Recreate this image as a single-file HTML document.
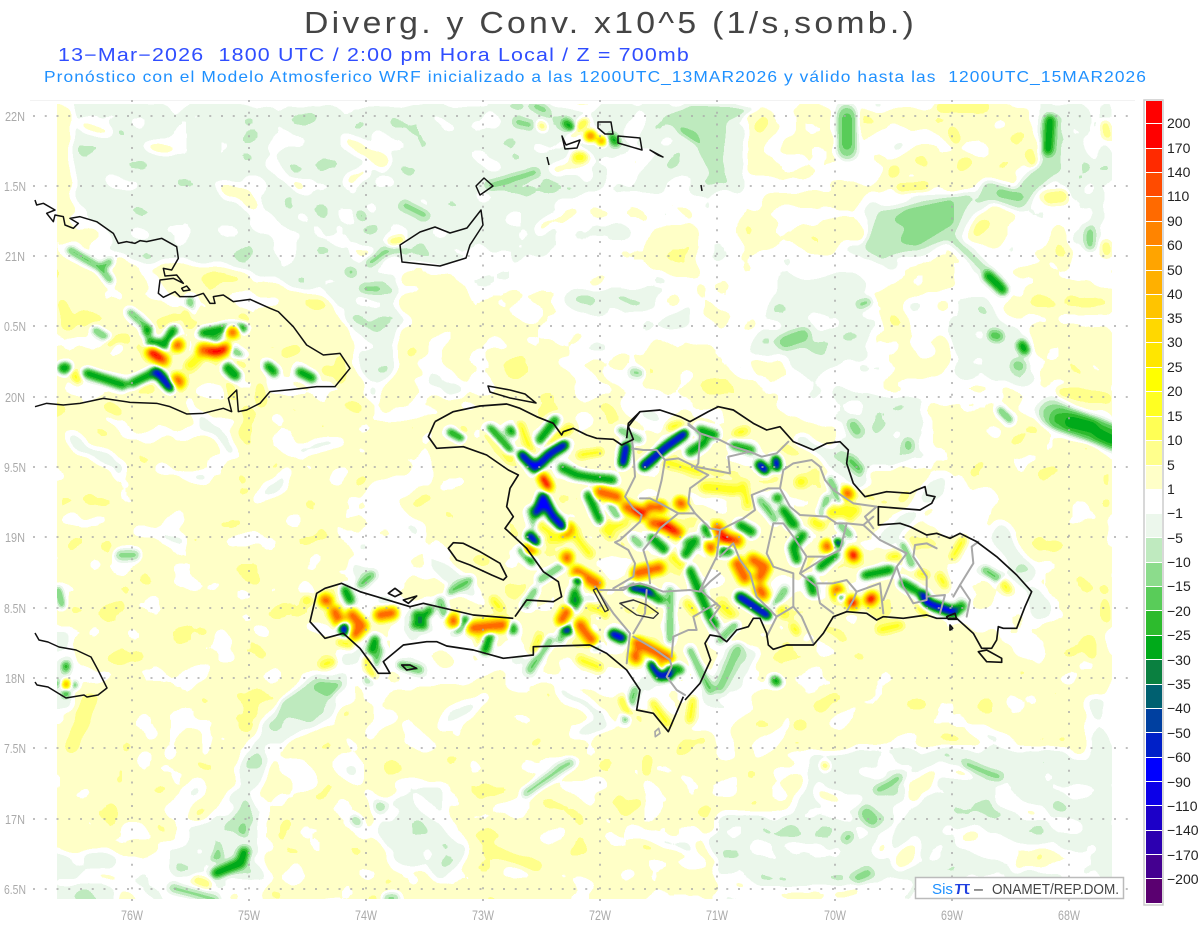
<!DOCTYPE html>
<html><head><meta charset="utf-8"><title>Diverg. y Conv.</title>
<style>
html,body{margin:0;padding:0;background:#fff}
svg{display:block}
text{font-family:"Liberation Sans",sans-serif;white-space:pre}
</style></head><body>
<svg xmlns="http://www.w3.org/2000/svg" width="1200" height="927" viewBox="0 0 1200 927">
<defs>
<clipPath id="plot"><rect x="57" y="104" width="1055" height="795"/></clipPath>
<filter id="base" filterUnits="userSpaceOnUse" x="0" y="0" width="1200" height="927" color-interpolation-filters="sRGB">
<feTurbulence type="fractalNoise" baseFrequency="0.03 0.045" numOctaves="2" seed="7" result="t1"/>
<feDisplacementMap in="SourceGraphic" in2="t1" scale="14" xChannelSelector="R" yChannelSelector="G" result="d"/>
<feTurbulence type="fractalNoise" baseFrequency="0.03 0.045" numOctaves="3" seed="23"/>
<feColorMatrix type="matrix" values="1 0 0 0 0 1 0 0 0 0 1 0 0 0 0 0 0 0 0 1" result="n"/>
<feComposite in="d" in2="n" operator="arithmetic" k1="0" k2="1" k3="0.1" k4="-0.05"/>
<feGaussianBlur stdDeviation="2"/>
</filter>
<filter id="cmap" filterUnits="userSpaceOnUse" x="0" y="0" width="1200" height="927" color-interpolation-filters="sRGB">
<feGaussianBlur stdDeviation="3"/>
<feComponentTransfer>
<feFuncR type="discrete" tableValues=".353 .267 .173 .11 .047 0 0 0 0 .039 0 .176 .349 .549 .749 .925 1 1 1 1 1 1 1 1 1 1 1 1 1 1 1 1 1"/>
<feFuncG type="discrete" tableValues="0 0 0 0 0 0 .125 .251 .376 .502 .667 .733 .8 .863 .918 .969 1 1 1 1 1 1 .902 .847 .769 .69 .643 .518 .416 .294 .165 0 0"/>
<feFuncB type="discrete" tableValues=".439 .565 .69 .784 .91 1 .784 .627 .439 .251 .102 .176 .349 .549 .749 .925 1 .784 .549 .333 .133 0 0 0 0 0 0 0 0 0 0 0 0"/>
</feComponentTransfer>
</filter>
</defs>

<rect width="1200" height="927" fill="#fff"/>
<line x1="30" y1="100.5" x2="1135" y2="100.5" stroke="#f2f2f2"/>

<g clip-path="url(#plot)">
<g filter="url(#cmap)">
<g filter="url(#base)">
<rect width="1200" height="927" fill="#808080"/>
<g fill="#878787">
<path d="M840 108L1030 108L1040 190L1000 190L880 190L833 160Z"/>
<path d="M745 108L832 108L833 165L800 182L745 172Z"/>
<path d="M740 195L860 195L858 240L800 262L745 245Z"/>
<path d="M963 233L973 210L1000 202L1017 213L1010 237L997 250L973 243Z"/>
<path d="M1000 272L1033 263L1112 290L1112 412L1073 402L1033 387L1045 367L1027 333L1003 307L1030 297Z"/>
<path d="M885 270L950 262L960 285L930 300L930 325L950 340L945 375L885 385Z"/>
<path d="M933 400L1000 402L1112 438L1112 745L1040 745L1045 640L1000 560L960 470L933 470Z"/>
<path d="M393 298L450 275L520 315L510 325L560 355L600 385L620 412L380 412L375 340L410 325Z"/>
<path d="M40 190L70 190L70 245L130 255L240 270L340 305L380 370L360 420L430 420L420 470L370 480L362 530L340 620L330 670L310 675L275 705L245 750L240 790L210 815L170 835L170 855L40 850Z"/>
<path d="M400 500L420 490L510 510L553 590L490 595L450 560L420 530Z"/>
<path d="M266 765L300 730L345 710L380 695L500 670L620 700L720 735L720 905L266 905Z"/>
<path d="M835 680L1067 680L1067 745L900 745L790 750L760 770L720 740L760 690Z"/>
<path d="M721 760L817 760L817 813L721 813Z"/>
<path d="M630 350L720 340L780 375L780 410L700 425L650 385Z"/>
<path d="M650 227L697 227L697 277L650 277Z"/>
<path d="M40 100L75 100L70 190L40 190Z"/>
<path d="M480 295L620 385L620 415L540 400Z"/>
<path d="M430 420L480 400L620 410L660 430L760 400L870 450L925 470L960 620L1040 660L1030 690L700 680L500 650L440 610L420 560L430 500Z"/>
</g>
<g fill="#787878">
<path d="M75 104L640 104L600 190L560 200L560 255L490 260L375 262L340 310L250 270L130 258L75 200Z"/>
<path d="M640 104L745 104L745 190L690 200L640 190Z"/>
<path d="M1040 100L1085 100L1092 180L1070 200L1040 190Z"/>
<path d="M862 250L870 205L1000 190L960 240L890 270Z"/>
<path d="M780 280L860 270L875 320L870 360L800 372L750 350Z"/>
<path d="M950 300L985 300L1040 380L1030 388L960 385L950 340Z"/>
<path d="M835 390L925 395L925 440L890 472L835 472Z"/>
<path d="M557 295L680 288L695 325L640 322L600 320Z"/>
<path d="M340 280L400 270L395 370L375 400L360 370Z"/>
<path d="M817 757L900 745L1030 747L1115 760L1115 880L915 878L800 885L717 880L717 820L790 812Z"/>
<path d="M417 360L440 352L466 393L440 397Z"/>
<path d="M40 630L72 630L72 710L40 710Z"/>
<path d="M263 745L270 760L255 800L258 840L250 875L176 875L170 860L216 810L248 760Z"/>
<path d="M251 750L273 710L316 677L350 675L360 700L290 740L265 760Z"/>
<path d="M369 800L440 790L470 850L440 880L390 860Z"/>
<path d="M40 853L116 853L116 905L40 905Z"/>
<path d="M1090 240L1112 210L1112 100L1100 105Z"/>
<path d="M740 640L762 650L727 712L705 705L715 660Z"/>
<path d="M1085 700L1105 700L1110 830L1090 830Z"/>
</g>
<g fill="none" stroke="#808080" stroke-linecap="round" stroke-linejoin="round" stroke-width="9">
<path d="M223 633L226 640" stroke-width="14"/><path d="M198 670L230 653"/><path d="M180 723L169 753" stroke-width="12"/><path d="M205 737L209 760" stroke-width="11"/><path d="M173 777L176 780"/><path d="M198 783L184 813" stroke-width="12"/><path d="M273 750L309 783" stroke-width="18"/><path d="M387 720L370 735" stroke-width="12"/><path d="M344 737L355 745"/><path d="M126 827L173 847" stroke-width="12"/><path d="M60 880L170 876"/><path d="M266 837L294 867" stroke-width="14"/><path d="M351 770L369 793" stroke-width="12"/><path d="M405 783L459 840" stroke-width="10"/><path d="M369 853L412 880" stroke-width="14"/><path d="M560 787L600 780"/><path d="M649 787L681 803" stroke-width="10"/><path d="M731 783L789 723"/><path d="M681 843L710 870"/><path d="M642 857L703 870"/><path d="M971 840L1067 870" stroke-width="26"/><path d="M1000 800L1080 830" stroke-width="12"/><path d="M971 730L1024 743" stroke-width="10"/><path d="M860 770L930 790" stroke-width="8"/><path d="M760 840L820 850" stroke-width="9"/><path d="M900 810L880 850" stroke-width="9"/>
<path d="M480 285L600 345" stroke-width="26"/><path d="M560 360L650 420" stroke-width="9"/><path d="M640 320L730 270" stroke-width="20"/><path d="M640 230L650 210" stroke-width="14"/><path d="M700 320L760 380" stroke-width="16"/><path d="M870 170L895 135" stroke-width="34"/><path d="M770 150L790 130" stroke-width="12"/><path d="M780 165L800 160" stroke-width="16"/><path d="M925 130L930 140" stroke-width="12"/><path d="M790 210L810 220" stroke-width="16"/><path d="M860 315L875 300" stroke-width="18"/><path d="M920 310L925 345" stroke-width="28"/><path d="M1000 600L1035 630" stroke-width="20"/>
<path d="M230 190L290 250" stroke-width="14"/><path d="M300 215L340 245" stroke-width="9"/><path d="M145 275L170 300" stroke-width="8"/><path d="M190 430L240 420" stroke-width="9"/><path d="M370 530L430 575" stroke-width="10"/><path d="M515 680L590 740" stroke-width="9"/><path d="M380 670L450 680" stroke-width="9"/><path d="M420 380L470 410" stroke-width="9"/>
</g>
<g fill="none" stroke="#787878" stroke-linecap="round" stroke-width="10">
<path d="M75 440L120 470"/><path d="M160 470L200 480"/><path d="M260 500L290 470"/><path d="M140 530L180 540"/><path d="M300 450L340 440"/><path d="M350 560L390 610"/><path d="M430 560L470 590" stroke-width="14"/><path d="M441 723L480 697" stroke-width="12"/><path d="M560 690L600 715"/><path d="M574 737L600 725" stroke-width="12"/><path d="M890 540L940 480" stroke-width="16"/><path d="M800 440L860 480" stroke-width="14"/><path d="M1000 530L1040 610" stroke-width="20"/><path d="M630 830L690 850"/><path d="M190 405L230 450"/><path d="M717 845L775 860" stroke-width="22"/></g>
<g fill="none" stroke="#878787" stroke-linecap="round" stroke-width="10">
<path d="M85 125L110 135"/><path d="M150 145L170 150"/><path d="M225 185L255 205"/><path d="M350 140L385 165" stroke-width="16"/><path d="M270 165L300 190"/><path d="M350 175L362 172" stroke-width="14"/><path d="M355 250L395 260"/><path d="M540 230L575 210"/><path d="M555 170L590 155"/><path d="M640 195L690 215"/><path d="M700 290L720 330"/><path d="M1060 240L1070 280" stroke-width="14"/><path d="M1105 320L1105 350" stroke-width="12"/><path d="M590 445L620 440" stroke-width="14"/><path d="M917 792L939 767L964 772" stroke-width="14"/><path d="M899 863L914 847" stroke-width="14"/><path d="M821 797L856 800" stroke-width="12"/><path d="M1017 867L1042 857" stroke-width="12"/></g>
</g>

<!-- large blobs -->
<g stroke="none">
<path fill="#707070" d="M863 245L880 210L953 195L973 192L953 240L880 260Z"/>
<path fill="#666666" d="M893 220L907 210L953 200L953 223L917 245L900 242L907 227Z"/>
<path fill="#707070" d="M690 104L760 108L728 122L723 172L732 188L712 178L700 145L672 125L660 118Z"/>
<path fill="#666666" d="M677 126L696 133L712 170L706 165L698 145L680 133Z"/>
<path fill="#707070" d="M344 683L312 680L280 700L273 733L287 717L309 723L326 703Z"/>
<path fill="#666666" d="M312 688L319 682L343 683L330 697Z"/>
<path fill="#707070" d="M248 797L255 820L244 837L223 827Z"/>
<path fill="#666666" d="M244 820L248 837L237 833Z"/>
<path fill="#666666" d="M219 843L223 860L209 862Z"/>
</g>
<g fill="none" stroke-linecap="round" stroke-linejoin="round">
<path stroke="#707070" stroke-width="10" d="M953 240L1000 283"/>
<path stroke="#707070" stroke-width="20" d="M1050 125L1052 165L1030 185L1018 200L990 190"/>
<path stroke="#686868" stroke-width="8" d="M1000 193L1020 197"/>
<path stroke="#6c6c6c" stroke-width="22" d="M847 115L847 150"/>
<path stroke="#626262" stroke-width="14" d="M847 118L847 145"/>
<path stroke="#6c6c6c" stroke-width="28" d="M1052 414L1075 423L1115 438"/>
<path stroke="#5c5c5c" stroke-width="22" d="M1060 419L1078 424L1115 438"/>
<path stroke="#4e4e4e" stroke-width="12" d="M1070 422L1092 427"/>
<path stroke="#4e4e4e" stroke-width="10" d="M1098 433L1112 440"/>
</g>

<!-- weak sea ridges -->
<g fill="none" stroke="#6a6a6a" stroke-width="10" stroke-linecap="round" stroke-linejoin="round">
<path d="M490 186L535 172"/><path d="M370 262L405 240"/><path d="M517 122L530 125"/><path d="M535 106L545 110"/><path d="M405 205L425 215"/><path d="M360 215L362 216"/><path d="M350 272L352 272"/><path d="M365 289L378 289"/>
<path d="M633 372L640 373"/><path d="M1090 232L1090 245" stroke-width="12"/><path d="M860 305L868 302"/><path d="M785 342L803 335" stroke-width="16"/><path d="M1017 365L1020 366" stroke-width="14"/><path d="M853 425L857 431" stroke-width="14"/><path d="M908 443L909 447" stroke-width="12"/><path d="M120 555L135 555" stroke-width="12"/><path d="M738 648L720 688" stroke-width="12"/><path d="M380 807L381 807"/><path d="M355 820L358 822"/><path d="M526 793L569 763"/><path d="M867 814L872 820" stroke-width="16"/><path d="M858 878L868 873" stroke-width="12"/><path d="M878 790L899 778"/><path d="M967 765L999 777"/><path d="M846 839L850 836"/><path d="M560 768L571 763"/><path d="M173 888L216 900"/><path d="M387 898L395 898"/>
</g>
<!-- moderate ridges -->
<g fill="none" stroke="#5f5f5f" stroke-width="8" stroke-linecap="round" stroke-linejoin="round">
<path d="M70 250L100 268L110 262"/><path d="M100 268L110 280"/><path d="M58 590L62 605"/><path d="M993 335L998 336" stroke-width="11"/>
<path d="M210 335L240 355"/><path d="M130 312L150 330"/><path d="M190 300L190 318"/><path d="M95 330L118 345"/><path d="M540 580L570 560"/><path d="M670 590L670 640"/><path d="M760 500L775 520"/><path d="M690 650L710 690"/><path d="M830 480L840 500"/><path d="M775 605L785 590"/><path d="M860 470L850 460"/><path d="M985 570L1000 580"/><path d="M360 585L372 575"/><path d="M450 592L470 580"/><path d="M550 640L530 670"/><path d="M635 690L625 720"/><path d="M1000 410L1010 420"/><path d="M400 665L420 670"/><path d="M380 650L368 680"/>
<path d="M530 510L535 525"/><path d="M610 505L620 520"/><path d="M633 538L640 545"/><path d="M683 538L690 545"/><path d="M703 547L708 552"/><path d="M730 553L735 560"/><path d="M767 507L772 515"/><path d="M787 517L790 525"/><path d="M827 498L822 515"/><path d="M903 545L912 565"/><path d="M840 525L850 535"/><path d="M620 430L640 440"/><path d="M570 620L560 640"/><path d="M535 590L525 605"/><path d="M590 600L600 615"/><path d="M440 600L445 615"/><path d="M720 640L735 625"/>
</g>

<!-- weak positive (sea) -->
<g fill="none" stroke="#929292" stroke-width="10" stroke-linecap="round" stroke-linejoin="round">
<path d="M63 305L68 325"/><path d="M110 343L125 338"/><path d="M163 323L175 318"/><path d="M260 387L262 402"/><path d="M287 353L295 350"/><path d="M327 370L330 372"/><path d="M187 312L189 325"/><path d="M243 317L246 322"/><path d="M237 362L240 365"/><path d="M230 385L232 395"/><path d="M140 387L150 388"/><path d="M110 408L118 412"/><path d="M340 362L340 380"/><path d="M541 125L543 127"/><path d="M392 242L402 240"/>
<path d="M91 700L71 747" stroke-width="12"/><path d="M1050 198L1062 196" stroke-width="14"/><path d="M760 127L764 122"/><path d="M953 132L956 140"/><path d="M893 170L894 172"/><path d="M963 165L968 162"/><path d="M1030 155L1033 162"/><path d="M1105 125L1107 135"/><path d="M1106 245L1107 252"/><path d="M900 188L925 186"/><path d="M940 106L985 106"/><path d="M1062 392L1108 398"/><path d="M648 760L646 772"/><path d="M625 810L638 803"/><path d="M491 850L537 867"/><path d="M251 705L252 712"/><path d="M197 880L207 884"/><path d="M1105 605L1107 618"/><path d="M1090 640L1092 655"/><path d="M797 725L803 725"/><path d="M824 765L826 766"/>
</g>
<!-- moderate positive -->
<g fill="none" stroke="#a0a0a0" stroke-width="8" stroke-linecap="round" stroke-linejoin="round">
<path d="M488 433L510 458"/><path d="M520 425L530 448"/><path d="M548 445L570 428"/><path d="M580 455L600 452"/><path d="M462 432L465 440"/><path d="M540 525L560 540"/><path d="M550 540L575 532"/><path d="M575 535L590 555"/><path d="M600 510L610 535"/><path d="M605 530L625 522"/><path d="M660 545L685 568"/><path d="M705 487L735 490" stroke-width="11"/><path d="M665 462L700 472"/><path d="M800 482L802 482" stroke-width="11"/><path d="M815 522L820 525" stroke-width="11"/><path d="M845 508L850 515" stroke-width="11"/><path d="M830 512L855 510" stroke-width="11"/><path d="M743 485L748 505"/><path d="M670 427L680 425"/><path d="M737 433L745 431"/><path d="M890 557L900 556"/><path d="M920 573L925 575"/><path d="M780 608L785 615"/><path d="M722 605L732 615"/><path d="M687 603L695 612"/><path d="M793 627L797 632"/><path d="M920 607L925 612"/><path d="M880 630L900 625"/><path d="M940 577L945 585"/><path d="M953 557L963 540"/><path d="M1003 583L1008 590"/><path d="M653 703L667 723"/><path d="M693 700L690 720"/><path d="M622 700L628 712"/><path d="M306 600L308 600"/><path d="M373 640L374 650"/><path d="M340 642L350 645"/><path d="M367 660L372 675"/><path d="M493 600L500 608"/><path d="M540 638L535 650"/><path d="M480 637L482 645"/><path d="M323 665L332 662"/><path d="M580 660L600 668"/><path d="M605 615L590 605"/>
<path d="M73 373L78 380"/><path d="M190 365L198 358" stroke-width="11"/><path d="M577 157L582 157" stroke-width="11"/><path d="M573 132L585 122"/>
</g>

<!-- strong convergence -->
<g fill="none" stroke="#4c4c4c" stroke-width="10" stroke-linecap="round" stroke-linejoin="round">
<path d="M562 468L577 475L595 478L613 480"/><path d="M490 428L510 450" stroke-width="8"/><path d="M450 432L462 438" stroke-width="8"/><path d="M510 430L512 432"/><path d="M588 495L600 520"/><path d="M555 420L540 440"/><path d="M512 627L513 630"/><path d="M417 615L423 625"/><path d="M430 610L415 625" stroke-width="8"/><path d="M457 628L465 620"/><path d="M490 635L485 650"/><path d="M575 592L572 605"/><path d="M522 550L532 562" stroke-width="8"/><path d="M690 570L710 617L715 625"/><path d="M797 560L793 547L803 535"/><path d="M820 567L835 555"/><path d="M810 580L813 592"/><path d="M865 575L890 570"/><path d="M903 583L915 590"/><path d="M777 498L778 498"/><path d="M783 510L795 525"/><path d="M700 430L715 435"/><path d="M733 445L752 450" stroke-width="8"/><path d="M690 452L705 442"/><path d="M652 538L665 550"/><path d="M695 540L685 555"/><path d="M740 525L752 532"/><path d="M730 545L722 552"/><path d="M710 535L705 528"/><path d="M1050 120L1048 150"/><path d="M1003 290L988 276"/><path d="M1022 345L1025 350"/><path d="M216 873L241 863L244 852"/><path d="M66 665L66 668" stroke-width="7"/><path d="M66 692L66 694" stroke-width="7"/><path d="M59 684L60 684" stroke-width="6"/><path d="M74 685L75 685" stroke-width="6"/>
<path d="M87 373L123 385"/><path d="M63 368L66 368" stroke-width="12"/><path d="M147 330L147 332"/><path d="M173 330L165 345L150 342"/><path d="M203 333L230 328L243 328"/><path d="M228 368L235 375" stroke-width="12"/><path d="M268 366L274 372"/><path d="M300 372L312 378"/><path d="M133 383L155 372"/><path d="M572 128L566 123" stroke-width="8"/><path d="M616 142L612 138" stroke-width="8"/><path d="M345 590L350 600"/><path d="M375 640L372 650"/><path d="M660 600L645 590"/><path d="M660 665L680 670"/><path d="M578 600L568 615"/><path d="M595 645L590 630"/><path d="M775 680L777 682"/><path d="M953 612L962 606"/>
</g>

<!-- orange -->
<g fill="none" stroke="#e0e0e0" stroke-width="12" stroke-linecap="round" stroke-linejoin="round">
<path d="M600 492L617 497"/><path d="M627 507L642 514"/><path d="M568 528L566 532"/><path d="M530 548L531 549"/><path d="M567 557L567 559"/><path d="M577 572L597 584"/><path d="M637 573L650 570"/><path d="M658 568L659 568"/><path d="M653 523L667 526L678 533"/><path d="M650 507L651 507"/><path d="M660 507L661 507"/><path d="M680 503L682 504"/><path d="M717 528L723 538L737 541"/><path d="M710 547L711 548"/><path d="M453 620L454 622"/><path d="M473 628L503 625"/><path d="M562 620L567 612"/><path d="M580 625L592 640"/><path d="M637 643L668 658"/><path d="M635 655L636 658"/><path d="M737 563L745 578"/><path d="M753 560L765 567L760 577"/><path d="M760 590L763 594"/><path d="M827 546L828 547"/><path d="M837 590L839 596"/><path d="M852 602L853 603"/><path d="M870 600L872 598"/><path d="M847 493L848 494"/><path d="M335 612L340 622"/><path d="M352 615L362 626"/><path d="M380 615L392 613"/><path d="M325 600L327 601"/><path d="M355 634L358 630"/><path d="M177 345L178 345"/><path d="M203 350L217 352L225 348"/><path d="M177 380L179 382"/><path d="M232 332L233 332"/><path d="M152 353L163 360"/><path d="M590 136L591 136" stroke-width="10"/><path d="M601 141L602 141" stroke-width="8"/><path d="M853 554L854 556"/><path d="M657 667L658 667"/><path d="M66 684L66 685" stroke-width="8"/>
</g>
<g fill="none" stroke="#f4f4f4" stroke-width="10" stroke-linecap="round">
<path d="M543 478L548 486"/><path d="M153 352L158 356"/><path d="M853 555L853 556"/><path d="M212 352L222 351"/><path d="M664 524L672 530"/><path d="M722 536L728 540"/><path d="M638 510L642 514"/><path d="M870 599L871 599"/><path d="M852 602L853 603"/>
</g>

<!-- deep convergence -->
<g fill="none" stroke="#282828" stroke-width="10" stroke-linecap="round" stroke-linejoin="round">
<path d="M522 455L535 468L552 452L564 445"/><path d="M543 497L537 512"/><path d="M543 497L552 515L563 527"/><path d="M623 463L626 447"/><path d="M644 466L665 448L684 434"/><path d="M530 536L535 542"/><path d="M577 580L579 581" stroke-width="8"/><path d="M613 634L622 638"/><path d="M565 629L569 631" stroke-width="8"/><path d="M632 588L650 592" stroke-width="8"/><path d="M652 665L660 676L670 675" stroke-width="9"/><path d="M740 597L752 605L767 615"/><path d="M760 465L765 470"/><path d="M776 460L777 467" stroke-width="9"/><path d="M837 543L838 543" stroke-width="9"/><path d="M840 597L841 597" stroke-width="7"/><path d="M923 595L927 603L953 612"/><path d="M157 372L170 387"/><path d="M343 627L345 631"/>
</g>
</g>
</g>

<!-- grid -->
<g stroke="#aaa" stroke-width="1.5" stroke-dasharray="2 9.75" fill="none">
<path d="M33 116H1135M33 186H1135M33 256H1135M33 326H1135M33 397H1135M33 467H1135M33 537H1135M33 608H1135M33 678H1135M33 748H1135M33 819H1135M33 889H1135"/>
<path d="M132 100V905M249 100V905M366 100V905M483 100V905M600 100V905M717 100V905M835 100V905M952 100V905M1069 100V905"/>
</g>

<!-- provinces, zoom-6 coordinates -->
<g transform="translate(620 400) scale(.33333)" fill="none" stroke="#a8a8a8" stroke-width="6" stroke-linejoin="round" stroke-linecap="round">
<path d="M35 115L40 150L45 230L15 290L40 325L65 345L60 365L0 420L-15 427L25 450L45 490L40 530L-20 565"/>
<path d="M35 145L70 150L110 150L135 180L175 175L225 200L330 220L325 170L390 155L425 170L470 160L505 125"/>
<path d="M135 180L125 240L110 300"/>
<path d="M205 75L240 100L235 190L225 205L265 225L210 265L205 310L225 340L175 340L120 385L110 400L70 450L85 500L90 550"/>
<path d="M205 70L240 100L300 120L340 140L390 155"/>
<path d="M60 295L90 295L120 310L175 340"/>
<path d="M225 340L270 385L300 390L370 355L405 330L395 285L445 265L480 265L490 210L520 190L575 180L600 200L615 240L640 270L700 310L770 320"/>
<path d="M480 265L510 320L540 345L620 350L650 370L680 370L730 375L760 350"/>
<path d="M300 390L290 470L240 570L300 620L270 660L310 720"/>
<path d="M300 470L340 430L360 480L390 520L410 590L470 650L440 710"/>
<path d="M460 370L490 370L520 410L560 470L540 520L590 560L600 610L640 640"/>
<path d="M460 370L440 460L460 500L520 520L520 620L470 650"/>
<path d="M520 620L545 650L580 730"/>
<path d="M680 370L660 450L620 470L565 470"/>
<path d="M620 470L540 520"/>
<path d="M590 550L640 550L680 540L710 575L700 600L680 635"/>
<path d="M710 575L780 550L790 640"/>
<path d="M730 375L780 420L860 460L830 500L790 600"/>
<path d="M830 500L850 560L880 610L920 600L920 530L880 470L885 435L920 430L950 445"/>
<path d="M920 590L975 585L960 640"/>
<path d="M1000 590L1020 555L1050 600L1040 650"/>
<path d="M1020 555L1060 490L1055 440L1075 425"/>
<path d="M770 320L735 350L760 385"/>
<path d="M0 565L60 550L90 560L130 575L210 570L240 575L270 545L300 520"/>
</g>
<!-- zoom-5 coordinates -->
<g transform="translate(420 400) scale(.33333)" fill="none" stroke="#a8a8a8" stroke-width="6" stroke-linejoin="round" stroke-linecap="round">
<path d="M525 560L580 640L630 700L620 790"/>
<path d="M640 710L700 745L750 780L755 800L740 830L770 870L795 885"/>
<path d="M760 710L755 770"/>
<path d="M760 710L805 690L830 690L820 650L890 610"/>
<path d="M680 570L675 640L640 700"/>
<path d="M540 570L610 570L640 550"/>
<path d="M600 610L640 600"/>
<path d="M706 1010L720 1000L716 985L705 995Z" stroke-width="5"/>
</g>

<!-- coast: zoom-6 coords -->
<g transform="translate(620 400) scale(.33333)" fill="none" stroke="#111" stroke-width="5" stroke-linejoin="round">
<path d="M20 115L25 70L60 35L120 30L180 50L210 65L265 35L295 20L340 30L400 70L440 90L480 80L520 125L580 150L620 130L660 125L685 150L680 190L700 250L735 290L800 275L870 280L890 270L915 260L920 285L945 290L935 310L900 330L775 320L775 375L840 370L870 380L920 405L950 400L990 415L1020 400L1070 425L1130 470L1190 525L1235 575L1215 620L1190 685L1150 685L1135 680L1130 720L1115 745L1085 745L1060 700L1010 655L950 655L920 645L850 655L790 650L770 660L740 640L680 635L640 650L610 700L580 735L500 735L460 748L445 735L440 700L420 655L400 655L385 680L350 690L320 725L300 710L270 705L255 730L272 780L240 850L195 900"/>
<path d="M1075 755L1100 750L1145 775L1145 787L1100 785Z"/>
<path d="M990 675L998 685L990 690Z"/>
<path d="M980 650L1005 640L1010 658L985 658Z"/>
</g>
<!-- coast: zoom-5 coords -->
<g transform="translate(420 400) scale(.33333)" fill="none" stroke="#111" stroke-width="5" stroke-linejoin="round">
<path d="M790 890L745 995L700 940L650 930L660 870L620 810L560 760L510 735"/>
<path d="M45 65L100 35L180 18L260 12L300 25L350 50L400 70L425 105L430 95L460 85L500 105L530 115L580 118L605 135L640 118L625 80L660 35"/>
<path d="M45 65L25 110L50 145L130 140L200 165L265 210L295 225L270 265L260 320L280 350L255 385L320 445L370 515L415 545L425 590L400 605L320 600L285 650"/>
<path d="M85 445L100 428L130 430L180 455L240 490L260 530L250 540L215 525L150 495L110 480Z"/>
<path d="M600 610L640 600L680 615L715 640L700 655L650 645Z" stroke="#333" stroke-width="4"/>
<path d="M520 570L530 565L565 630L555 635Z" stroke="#333" stroke-width="4"/>
</g>
<!-- zoom-7 coords -->
<g transform="translate(300 570) scale(.33333)" fill="none" stroke="#111" stroke-width="5" stroke-linejoin="round">
<path d="M870 225L700 230L700 255L610 265L520 240L440 228L410 215L380 215L310 225L250 275L270 310L235 310L180 235L130 190L75 205L30 155L50 70L75 55L125 40L180 65L280 95L330 110L370 100L520 135L640 145"/>
<path d="M265 70L285 55L305 70L285 80Z"/>
<path d="M305 285L330 285L350 295L320 300Z"/>
<path d="M310 90L350 78L325 100Z"/>
</g>
<!-- Cuba, zoom-8 coords -->
<g transform="translate(30 190) scale(.33333)" fill="none" stroke="#111" stroke-width="4.5" stroke-linejoin="round">
<path d="M15 30L20 45L40 40L75 60L50 70L70 95L75 75L100 80L105 105L130 115L145 100L120 85L150 80L200 95L250 130L265 160L290 155L315 160L330 152L350 155L395 145L440 170L445 205L425 240L400 235L405 258L440 255L460 280L430 265L390 270L385 310L400 322L435 305L450 320L490 320L520 310L540 340L555 340L550 320L580 315L610 335L660 328L720 355L745 365L790 410L830 465L880 495L930 490L960 535L915 590L860 590L790 598L720 605L690 640L650 660L625 665L620 600L595 625L605 665L580 655L520 670L470 672L420 650L380 640L300 637L220 625L150 640L100 645L50 640L15 650"/>
<path d="M455 295L470 288L480 300L460 303Z"/>
</g>
<!-- other islands, real coords -->
<g fill="none" stroke="#111" stroke-width="1.5" stroke-linejoin="round">
<path d="M35 633L39 640L48 642L59 647L76 650L91 657L98 670L107 688L98 695L87 697L84 695L66 698L48 687L37 685L35 682"/>
<path d="M481 210L483 225L470 245L466 258L440 266L402 262L400 245L420 232L435 227L450 233L467 228Z"/>
<path d="M476 186L484 178L493 186L480 195Z"/>
<path d="M562 136L566 145L580 140L577 148L565 149Z"/>
<path d="M598 122L611 122L613 134L605 134L598 128Z"/>
<path d="M618 136L640 138L642 150L618 143Z"/>
<path d="M650 150L663 157L658 155Z"/>
<path d="M547 157L549 165M701 185L702 191"/>
<path d="M488 386L510 390L525 394L536 403L510 398L490 392Z"/>
</g>

<!-- colourbar -->
<rect x="1144" y="100" width="19" height="805" fill="#fff" stroke="#ccc" stroke-width="1.5"/>
<g stroke="none">
<rect x="1146" y="101" width="16" height="22" fill="#ff0000"/>
<rect x="1146" y="124" width="16" height="24" fill="#ff0000"/>
<rect x="1146" y="149" width="16" height="23" fill="#ff2a00"/>
<rect x="1146" y="173" width="16" height="23" fill="#ff4b00"/>
<rect x="1146" y="197" width="16" height="24" fill="#ff6a00"/>
<rect x="1146" y="222" width="16" height="23" fill="#ff8400"/>
<rect x="1146" y="246" width="16" height="24" fill="#ffa400"/>
<rect x="1146" y="271" width="16" height="23" fill="#ffb000"/>
<rect x="1146" y="295" width="16" height="23" fill="#ffc400"/>
<rect x="1146" y="319" width="16" height="23" fill="#ffd800"/>
<rect x="1146" y="343" width="16" height="24" fill="#ffe600"/>
<rect x="1146" y="368" width="16" height="23" fill="#ffff00"/>
<rect x="1146" y="392" width="16" height="24" fill="#ffff22"/>
<rect x="1146" y="417" width="16" height="23" fill="#ffff55"/>
<rect x="1146" y="441" width="16" height="24" fill="#ffff8c"/>
<rect x="1146" y="466" width="16" height="23" fill="#ffffc8"/>
<rect x="1146" y="490" width="16" height="23" fill="#ffffff"/>
<rect x="1146" y="514" width="16" height="23" fill="#ecf7ec"/>
<rect x="1146" y="538" width="16" height="24" fill="#bfeabf"/>
<rect x="1146" y="563" width="16" height="23" fill="#8cdc8c"/>
<rect x="1146" y="587" width="16" height="23" fill="#59cc59"/>
<rect x="1146" y="611" width="16" height="24" fill="#2dbb2d"/>
<rect x="1146" y="636" width="16" height="23" fill="#00aa1a"/>
<rect x="1146" y="660" width="16" height="24" fill="#0a8040"/>
<rect x="1146" y="685" width="16" height="23" fill="#006070"/>
<rect x="1146" y="709" width="16" height="23" fill="#0040a0"/>
<rect x="1146" y="733" width="16" height="24" fill="#0020c8"/>
<rect x="1146" y="758" width="16" height="23" fill="#0000ff"/>
<rect x="1146" y="782" width="16" height="23" fill="#0c00e8"/>
<rect x="1146" y="806" width="16" height="24" fill="#1c00c8"/>
<rect x="1146" y="831" width="16" height="23" fill="#2c00b0"/>
<rect x="1146" y="855" width="16" height="23" fill="#440090"/>
<rect x="1146" y="879" width="16" height="24" fill="#5a0070"/>
</g>
<g font-size="14" fill="#222">
<text x="1167" y="128">200</text><text x="1167" y="153">170</text><text x="1167" y="177">140</text><text x="1167" y="201">110</text><text x="1167" y="226">90</text><text x="1167" y="250">60</text><text x="1167" y="275">50</text><text x="1167" y="299">40</text><text x="1167" y="323">35</text><text x="1167" y="347">30</text><text x="1167" y="372">25</text><text x="1167" y="396">20</text><text x="1167" y="421">15</text><text x="1167" y="445">10</text><text x="1167" y="470">5</text><text x="1167" y="494">1</text>
<text x="1167" y="518">−1</text><text x="1167" y="543">−5</text><text x="1167" y="567">−10</text><text x="1167" y="591">−15</text><text x="1167" y="616">−20</text><text x="1167" y="640">−25</text><text x="1167" y="665">−30</text><text x="1167" y="689">−35</text><text x="1167" y="713">−40</text><text x="1167" y="738">−50</text><text x="1167" y="762">−60</text><text x="1167" y="787">−90</text><text x="1167" y="811">−110</text><text x="1167" y="835">−140</text><text x="1167" y="860">−170</text><text x="1167" y="884">−200</text>
</g>

<!-- axis labels -->
<g font-size="13" fill="#aaa">
<text x="5" y="121" textLength="20" lengthAdjust="spacingAndGlyphs">22N</text><text x="4" y="191" textLength="22" lengthAdjust="spacingAndGlyphs">1.5N</text><text x="5" y="261" textLength="20" lengthAdjust="spacingAndGlyphs">21N</text><text x="4" y="331" textLength="22" lengthAdjust="spacingAndGlyphs">0.5N</text><text x="5" y="402" textLength="20" lengthAdjust="spacingAndGlyphs">20N</text><text x="4" y="472" textLength="22" lengthAdjust="spacingAndGlyphs">9.5N</text><text x="5" y="542" textLength="20" lengthAdjust="spacingAndGlyphs">19N</text><text x="4" y="613" textLength="22" lengthAdjust="spacingAndGlyphs">8.5N</text><text x="5" y="683" textLength="20" lengthAdjust="spacingAndGlyphs">18N</text><text x="4" y="753" textLength="22" lengthAdjust="spacingAndGlyphs">7.5N</text><text x="5" y="824" textLength="20" lengthAdjust="spacingAndGlyphs">17N</text><text x="4" y="894" textLength="22" lengthAdjust="spacingAndGlyphs">6.5N</text>
</g>
<g font-size="14" fill="#aaa">
<text x="121" y="920" textLength="22" lengthAdjust="spacingAndGlyphs">76W</text><text x="238" y="920" textLength="22" lengthAdjust="spacingAndGlyphs">75W</text><text x="355" y="920" textLength="22" lengthAdjust="spacingAndGlyphs">74W</text><text x="472" y="920" textLength="22" lengthAdjust="spacingAndGlyphs">73W</text><text x="589" y="920" textLength="22" lengthAdjust="spacingAndGlyphs">72W</text><text x="706" y="920" textLength="22" lengthAdjust="spacingAndGlyphs">71W</text><text x="824" y="920" textLength="22" lengthAdjust="spacingAndGlyphs">70W</text><text x="941" y="920" textLength="22" lengthAdjust="spacingAndGlyphs">69W</text><text x="1058" y="920" textLength="22" lengthAdjust="spacingAndGlyphs">68W</text>
</g>

<!-- logo box -->
<rect x="915.5" y="877.5" width="208" height="21" fill="#fff" stroke="#bbb" stroke-width="1.5"/>
<text x="932" y="894" font-size="15" fill="#1e90ff" textLength="21" lengthAdjust="spacingAndGlyphs">Sis</text>
<text x="954" y="894" font-size="18" fill="#2040e0" textLength="17" lengthAdjust="spacingAndGlyphs">π</text>
<text x="974" y="894" font-size="16" fill="#333">–</text>
<text x="992" y="894" font-size="15" fill="#444" textLength="127" lengthAdjust="spacingAndGlyphs">ONAMET/REP.DOM.</text>

<!-- titles -->
<text x="304" y="33" font-size="31" fill="#444" letter-spacing="3" textLength="613" lengthAdjust="spacingAndGlyphs">Diverg. y Conv. x10^5 (1/s,somb.)</text>
<text x="58" y="61" font-size="18" fill="#2f4dff" letter-spacing="1" textLength="632" lengthAdjust="spacingAndGlyphs">13−Mar−2026  1800 UTC / 2:00 pm Hora Local / Z = 700mb</text>
<text x="44" y="82" font-size="16" fill="#1e90ff" letter-spacing="1" textLength="1103" lengthAdjust="spacingAndGlyphs">Pronóstico con el Modelo Atmosferico WRF inicializado a las 1200UTC_13MAR2026 y válido hasta las  1200UTC_15MAR2026</text>
</svg>
</body></html>
